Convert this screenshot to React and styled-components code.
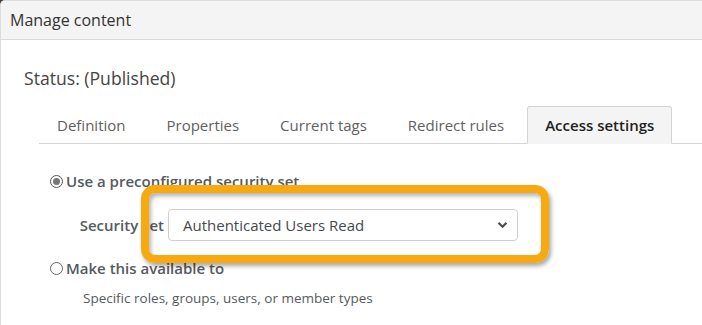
import styled, { createGlobalStyle } from "styled-components";

const GlobalStyle = createGlobalStyle`
  html, body {
    margin: 0;
    padding: 0;
    background: #3c3c3c;
    font-family: "Open Sans", "Liberation Sans", sans-serif;
  }
  * {
    box-sizing: border-box;
  }
`;

const Dialog = styled.div`
  position: relative;
  width: 702px;
  height: 325px;
  background: #ffffff;
  border-top: 1px solid #dcdcdc;
  border-left: 1px solid #dcdcdc;
  border-top-left-radius: 5px;
  overflow: hidden;
`;

const Header = styled.div`
  height: 39px;
  display: flex;
  align-items: center;
  padding-left: 9px;
  background: #f4f4f4;
  border-bottom: 1px solid #dadada;
  color: #333;
  font-size: 16px;
`;

const Body = styled.div`
  padding: 26px 0 0 23px;
`;

const Status = styled.div`
  font-size: 17.6px;
  line-height: 24px;
  color: #444;
`;

const TabList = styled.div`
  display: flex;
  gap: 5px;
  margin: 16px 0 0 15px;
  border-bottom: 1px solid #d4d4d4;
`;

const Tab = styled.div`
  height: 38px;
  line-height: 36px;
  padding: 0 17px;
  font-size: 15px;
  margin-bottom: -1px;
  color: ${(p) => (p.$active ? "#1f1f1f" : "#5f5f5f")};
  font-weight: ${(p) => (p.$active ? 600 : 400)};
  background: ${(p) => (p.$active ? "#f4f4f4" : "transparent")};
  border: 1px solid ${(p) => (p.$active ? "#d4d4d4" : "transparent")};
  border-bottom-color: ${(p) => (p.$active ? "#f4f4f4" : "transparent")};
  border-radius: 3px 3px 0 0;
`;

const Panel = styled.div`
  padding: 27px 0 0 26px;
`;

const Option = styled.label`
  display: flex;
  align-items: center;
  gap: 3px;
  height: 20px;
  font-size: 15px;
  font-weight: 600;
  color: #555a60;
  margin-top: ${(p) => p.$gap || 0}px;
`;

const Radio = styled.span`
  width: 13px;
  height: 13px;
  border-radius: 50%;
  border: 1px solid ${(p) => (p.$checked ? "#555" : "#666")};
  display: flex;
  align-items: center;
  justify-content: center;
  &::after {
    content: "";
    width: 7px;
    height: 7px;
    border-radius: 50%;
    background: ${(p) => (p.$checked ? "#777" : "transparent")};
  }
`;

const FieldRow = styled.div`
  display: flex;
  align-items: center;
  gap: 4px;
  margin-top: 18px;
`;

const FieldLabel = styled.div`
  width: 114px;
  text-align: right;
  font-size: 15px;
  font-weight: 600;
  color: #555a60;
`;

const Select = styled.div`
  width: 350px;
  height: 32px;
  display: flex;
  align-items: center;
  justify-content: space-between;
  padding: 0 9px 0 14px;
  border: 1px solid #cfcfcf;
  border-radius: 4px;
  font-size: 15px;
  color: #454a50;
`;

const Hint = styled.div`
  margin: 11px 0 0 33px;
  font-size: 13.5px;
  line-height: 18px;
  color: #555a60;
`;

const Highlight = styled.div`
  position: absolute;
  left: 140px;
  top: 184px;
  width: 408px;
  height: 78px;
  border: 8px solid #f6aa0f;
  border-radius: 14px;
  box-shadow: 2px 3px 4px rgba(0, 0, 0, 0.35), inset 2px 3px 4px rgba(0, 0, 0, 0.3);
  pointer-events: none;
`;

const tabs = ["Definition", "Properties", "Current tags", "Redirect rules", "Access settings"];

export default function App() {
  return (
    <>
      <GlobalStyle />
      <Dialog>
        <Header>Manage content</Header>
        <Body>
          <Status>Status: (Published)</Status>
          <TabList>
            {tabs.map((t) => (
              <Tab key={t} $active={t === "Access settings"}>
                {t}
              </Tab>
            ))}
          </TabList>
          <Panel>
            <Option>
              <Radio $checked />
              Use a preconfigured security set
            </Option>
            <FieldRow>
              <FieldLabel>Security set</FieldLabel>
              <Select>
                Authenticated Users Read
                <svg width="11" height="8" viewBox="0 0 11 8">
                  <path d="M1.5 1.8 L5.5 5.8 L9.5 1.8" fill="none" stroke="#4a4f55" strokeWidth="2.2" />
                </svg>
              </Select>
            </FieldRow>
            <Option $gap={17}>
              <Radio />
              Make this available to
            </Option>
            <Hint>Specific roles, groups, users, or member types</Hint>
          </Panel>
        </Body>
        <Highlight />
      </Dialog>
    </>
  );
}
